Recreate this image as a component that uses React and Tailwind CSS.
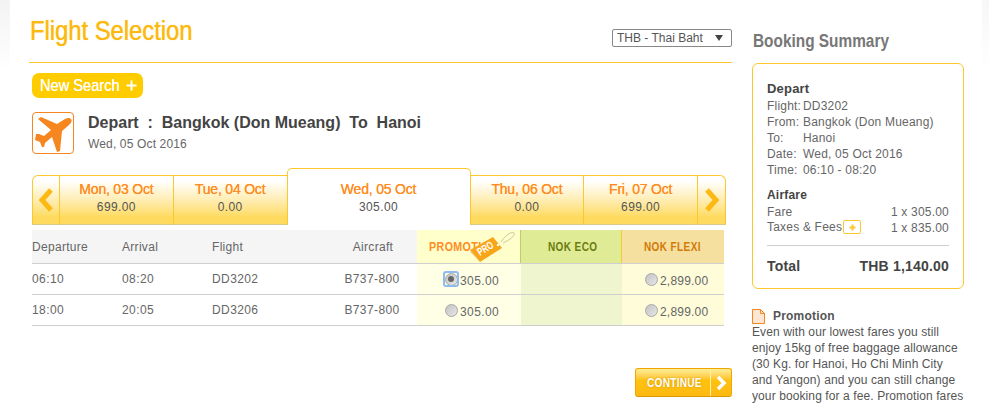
import React from 'react';

const dayTab = "flex-1 h-[50px] flex flex-col items-center pt-[3px] border-t border-r border-[#fdc82f] border-b border-b-[#d9c98c] bg-gradient-to-b from-white from-10% to-[#fedb5f] to-85%";

const DayTab = ({ day, price, width }) => (
    <div className={`${dayTab} ${width}`}>
        <span className="text-[14px] leading-[20px] tracking-[-0.2px] text-[#ff8c22] [text-shadow:0_0_0.5px_#ff8c22]">{day}</span>
        <span className="text-[12px] leading-[16px] tracking-[0.4px] text-[#555]">{price}</span>
    </div>
);

const Chevron = ({ left }) => (
    <svg width="18" height="26" viewBox="0 0 18 26">
        <polyline
            points={left ? "14,3 5,13 14,23" : "4,3 13,13 4,23"}
            fill="none"
            stroke="#fdb913"
            strokeWidth="5"
        />
    </svg>
);

const Radio = ({ checked }) => (
    <span className={`inline-flex items-center justify-center shrink-0 w-[14px] h-[14px] ${checked ? 'outline outline-2 -outline-offset-1 outline-[#8ebcf0] rounded-[2px]' : ''}`}>
        <span className="w-[13px] h-[13px] rounded-full border border-[#a8a8a8] bg-gradient-to-br from-[#c4c4c4] to-[#e6e6e6] flex items-center justify-center">
            {checked && <span className="w-[6px] h-[6px] rounded-full bg-[#666]"></span>}
        </span>
    </span>
);

const FlightRow = ({ dep, arr, flight, checked }) => (
    <div className="grid grid-cols-[90px_90px_115px_90px_104px_101px_102px] h-[31px] border-b border-[#cfcfcf] text-[12px] tracking-[0.4px] text-[#666]">
        <div className="flex items-center">{dep}</div>
        <div className="flex items-center">{arr}</div>
        <div className="flex items-center">{flight}</div>
        <div className="flex items-center justify-center">B737-800</div>
        <div className="flex items-center pl-[27px] gap-[2px] bg-[#ffffe6]">
            <Radio checked={checked} />
            <span className="pt-[3px]">305.00</span>
        </div>
        <div className="bg-[#eef5cf]"></div>
        <div className="flex items-center pl-[22px] gap-[2px] bg-[#fffcd9]">
            <Radio />
            <span className="pt-[3px] tracking-[0.2px]">2,899.00</span>
        </div>
    </div>
);

const SummaryLine = ({ label, value }) => (
    <div className="flex h-[16px]">
        <span className="w-[36px] shrink-0">{label}</span>
        <span>{value}</span>
    </div>
);

const Narrow = ({ scale, className, children }) => (
    <span className={`inline-block whitespace-nowrap origin-left ${scale} ${className}`}>{children}</span>
);

export default function App() {
    return (
        <div className="w-[989px] h-[404px] overflow-hidden flex bg-white font-['Liberation_Sans',Arial,sans-serif]">
            <div className="w-[10px] h-[70px] shrink-0 bg-gradient-to-b from-[#f3f3f3] to-white"></div>

            {/* main column */}
            <div className="w-[703px] ml-[19px] shrink-0">
                <div className="h-[63px] border-b border-[#fdc82f] flex justify-between relative">
                    <div className="pt-[15px] pl-[1px] h-[32px]">
                        <Narrow scale="scale-x-[0.88]" className="text-[27px] leading-[32px] text-[#fdb913] [text-shadow:0_0_0.8px_#fdb913]">Flight Selection</Narrow>
                    </div>
                    <div className="mt-[29px] w-[120px] h-[18px] border border-[#888] rounded-[2px] flex items-center justify-between pl-[4px] pr-[8px] text-[12px] text-[#555]">
                        <span>THB - Thai Baht</span>
                        <span className="w-0 h-0 border-l-[4px] border-r-[4px] border-t-[6px] border-l-transparent border-r-transparent border-t-[#444]"></span>
                    </div>
                </div>

                <div className="pl-[3px]">
                    <div className="mt-[10px] w-[111px] h-[25px] rounded-[7px] bg-[#ffcc00] flex items-center pl-[8px] gap-[5px] text-white overflow-hidden">
                        <Narrow scale="scale-x-[0.86]" className="w-[80px] text-[17px] leading-[25px] [text-shadow:0_0_0.5px_white]">New Search</Narrow>
                        <svg width="13" height="13" viewBox="0 0 13 13"><path d="M6.5 1.5v10M1.5 6.5h10" stroke="white" strokeWidth="2" /></svg>
                    </div>

                    <div className="mt-[14px] flex items-start gap-[14px]">
                        <div className="w-[42px] h-[42px] rounded-[4px] border border-[#f6861f] flex items-center justify-center">
                            <svg width="40" height="40" viewBox="3 3 40 40">
                                <path d="M41 9 Q43 11 39 15 L32 21 L30 41 L27 42 L22 27 L15 33 L14 37 L12 37 L10 32 L5 30 L6 24 L9 24 L14 26 L21 20 L8 9 L11 7 L27 14 L35 9 Q39 7 41 9Z" fill="#f6861f" />
                            </svg>
                        </div>
                        <div>
                            <div className="text-[16px] leading-[20px] font-bold text-[#444] whitespace-pre mt-[1px]">Depart  :  Bangkok (Don Mueang)  To  Hanoi</div>
                            <div className="text-[12px] leading-[16px] tracking-[0.15px] text-[#666] mt-[3px]">Wed, 05 Oct 2016</div>
                        </div>
                    </div>

                    {/* date tabs */}
                    <div className="mt-[14px] flex items-end w-[694px] text-center">
                        <div className="w-[28px] h-[50px] flex items-center justify-center border border-[#fdc82f] border-b-[#d9c98c] rounded-tl-[6px] bg-gradient-to-b from-white from-10% to-[#fedb5f] to-85%"><Chevron left /></div>
                        <DayTab day="Mon, 03 Oct" price="699.00" width="w-[114px]" />
                        <DayTab day="Tue, 04 Oct" price="0.00" width="w-[114px]" />
                        <div className="w-[184px] h-[57px] shrink-0 flex flex-col items-center justify-end pb-[10px] bg-white border-t border-x border-[#fdc82f] rounded-t-[5px] -ml-[1px]">
                            <span className="text-[14px] leading-[20px] tracking-[-0.2px] text-[#ff8c22] [text-shadow:0_0_0.5px_#ff8c22]">Wed, 05 Oct</span>
                            <span className="text-[12px] leading-[16px] tracking-[0.4px] text-[#555]">305.00</span>
                        </div>
                        <DayTab day="Thu, 06 Oct" price="0.00" width="w-[114px]" />
                        <DayTab day="Fri, 07 Oct" price="699.00" width="w-[114px]" />
                        <div className="w-[28px] h-[50px] flex items-center justify-center border-t border-r border-[#fdc82f] border-b border-b-[#d9c98c] rounded-tr-[6px] bg-gradient-to-b from-white from-10% to-[#fedb5f] to-85%"><Chevron /></div>
                    </div>

                    {/* flights table */}
                    <div className="mt-[5px] w-[692px] relative">
                        <div className="grid grid-cols-[90px_90px_115px_90px_104px_101px_102px] h-[34px] border-b border-[#cfcfcf] text-[12px] tracking-[0.3px] text-[#666]">
                            <div className="flex items-center bg-[#f5f5f5]">Departure</div>
                            <div className="flex items-center bg-[#f5f5f5]">Arrival</div>
                            <div className="flex items-center bg-[#f5f5f5]">Flight</div>
                            <div className="flex items-center justify-center pl-[2px] bg-[#f5f5f5]">Aircraft</div>
                            <div className="flex items-center pl-[12px] bg-[#ffffcc] border-r border-[#b9cf6a] overflow-hidden">
                                <Narrow scale="scale-x-[0.82]" className="text-[13px] font-bold tracking-[0.5px] text-[#ff8c22]">PROMOTION</Narrow>
                            </div>
                            <div className="flex items-center pl-[27px] bg-[#dfeb95] border-r border-[#fdc82f]">
                                <Narrow scale="scale-x-[0.77]" className="text-[13px] font-bold tracking-[0.5px] text-[#6b7d10]">NOK ECO</Narrow>
                            </div>
                            <div className="flex items-center pl-[22px] bg-[#f5e0a0]">
                                <Narrow scale="scale-x-[0.77]" className="text-[13px] font-bold tracking-[0.5px] text-[#d27a06]">NOK FLEXI</Narrow>
                            </div>
                        </div>
                        <FlightRow dep="06:10" arr="08:20" flight="DD3202" checked />
                        <FlightRow dep="18:00" arr="20:05" flight="DD3206" />

                        {/* PRO tag sits over the promotion header */}
                        <svg width="50" height="32" viewBox="0 0 50 32" className="absolute left-[436px] top-[1px]">
                            <path d="M33 11 C37 5 43 0 46 2 C48 4 42 9 35 12" fill="none" stroke="#c9c4a0" strokeWidth="1" />
                            <polygon points="2,19 25,6 34,17 12,31" fill="#f9a51a" />
                            <polygon points="2,19 12,31 14,32 3,22" fill="#e8c08a" />
                            <circle cx="30" cy="14" r="1.2" fill="#fff" />
                            <text x="0" y="0" transform="translate(12 25) rotate(-32)" fontSize="11" fontWeight="bold" fill="#fff" fontFamily="Liberation Sans" textLength="17" lengthAdjust="spacingAndGlyphs">PRO</text>
                        </svg>
                    </div>

                    <div className="mt-[42px] flex justify-end w-[700px]">
                        <div className="w-[97px] h-[29px] flex rounded-[3px] border border-[#f0a800] border-b-[#d99a00] bg-gradient-to-b from-[#ffe98a] from-5% via-[#ffc20e] via-40% to-[#fdb913] text-white overflow-hidden">
                            <div className="w-[75px] border-r border-[#fff0b0] flex items-center pl-[11px]">
                                <Narrow scale="scale-x-[0.78]" className="text-[13px] font-bold tracking-[0.3px] [text-shadow:0_0_2px_#c98a00]">CONTINUE</Narrow>
                            </div>
                            <div className="flex-1 flex items-center justify-center">
                                <svg width="12" height="16" viewBox="0 0 12 16"><polyline points="3,2 9,8 3,14" fill="none" stroke="white" strokeWidth="3.5" /></svg>
                            </div>
                        </div>
                    </div>
                </div>
            </div>

            {/* booking summary */}
            <div className="w-[212px] ml-[20px] shrink-0 text-[12px] tracking-[0.2px] text-[#666]">
                <div className="h-[63px] pt-[29px] pl-[1px]">
                    <Narrow scale="scale-x-[0.81]" className="text-[19px] leading-[24px] font-bold tracking-normal text-[#777]">Booking Summary</Narrow>
                </div>
                <div className="h-[226px] border border-[#fdc82f] rounded-[6px] px-[14px] pt-[16px]">
                    <div className="text-[13px] leading-[17px] font-bold text-[#444]">Depart</div>
                    <SummaryLine label="Flight:" value="DD3202" />
                    <SummaryLine label="From:" value="Bangkok (Don Mueang)" />
                    <SummaryLine label="To:" value="Hanoi" />
                    <SummaryLine label="Date:" value="Wed, 05 Oct 2016" />
                    <SummaryLine label="Time:" value="06:10 - 08:20" />
                    <div className="mt-[11px] text-[12px] leading-[15px] font-bold text-[#444]">Airfare</div>
                    <div className="flex justify-between h-[16px]"><span>Fare</span><span>1 x 305.00</span></div>
                    <div className="flex justify-between h-[16px]">
                        <span className="flex items-center">Taxes &amp; Fees
                            <span className="ml-[1px] w-[18px] h-[14px] border border-[#fdc82f] rounded-[2px] flex items-center justify-center">
                                <svg width="7" height="7" viewBox="0 0 7 7"><path d="M3.5 0.5v6M0.5 3.5h6" stroke="#fdc82f" strokeWidth="2" /></svg>
                            </span>
                        </span>
                        <span>1 x 835.00</span>
                    </div>
                    <div className="mt-[10px] pt-[10px] border-t border-[#cfcfcf] flex justify-between text-[14px] leading-[20px] font-bold text-[#444] tracking-[0.2px]">
                        <span>Total</span><span>THB 1,140.00</span>
                    </div>
                </div>

                <div className="mt-[19px] flex items-center gap-[8px] h-[16px]">
                    <svg width="13" height="15" viewBox="0 0 13 15"><path d="M0.5 0.5h8l4 4v10h-12z" fill="#ffe6d2" stroke="#f6861f" /><path d="M8.5 0.5v4h4" fill="none" stroke="#f6861f" /></svg>
                    <span className="font-bold text-[#555]">Promotion</span>
                </div>
                <p className="leading-[16px] tracking-[0.1px] text-[#555] whitespace-nowrap">
                    Even with our lowest fares you still<br />
                    enjoy 15kg of free baggage allowance<br />
                    (30 Kg. for Hanoi, Ho Chi Minh City<br />
                    and Yangon) and you can still change<br />
                    your booking for a fee. Promotion fares
                </p>
            </div>

            <div className="w-[7px] h-[70px] shrink-0 ml-[18px] bg-gradient-to-b from-[#f7f7f7] to-white"></div>
        </div>
    );
}
